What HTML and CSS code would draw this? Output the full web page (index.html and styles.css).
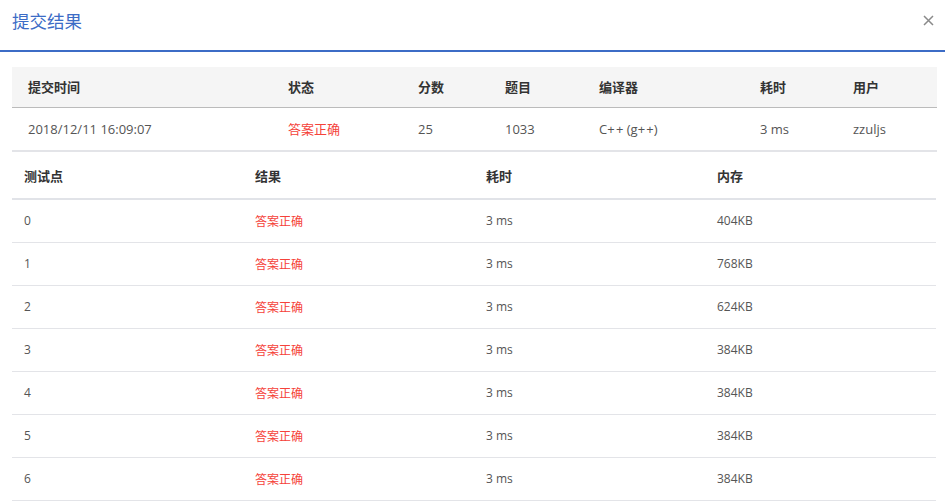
FILE: index.html
```html
<!DOCTYPE html>
<html lang="zh-CN">
<head>
    <meta charset="UTF-8">
    <title>提交结果</title>
    <link rel="stylesheet" href="styles.css">
</head>
<body>

    <div class="modal">
        <div class="modal-header">
            <h2 class="modal-title">提交结果</h2>
            <svg class="close" width="11" height="11" viewBox="0 0 11 11">
                <path d="M1 1L10 10M10 1L1 10" stroke="#8a8a8a" stroke-width="1.5" fill="none"/>
            </svg>
        </div>

        <div class="modal-body">
            <table class="summary">
                <thead>
                    <tr>
                        <th class="c-time">提交时间</th>
                        <th class="c-state">状态</th>
                        <th class="c-score">分数</th>
                        <th class="c-prob">题目</th>
                        <th class="c-lang">编译器</th>
                        <th class="c-cost">耗时</th>
                        <th class="c-user">用户</th>
                    </tr>
                </thead>
                <tbody>
                    <tr>
                        <td>2018/12/11 16:09:07</td>
                        <td class="ok">答案正确</td>
                        <td>25</td>
                        <td>1033</td>
                        <td>C+&#8202;+ (g+&#8202;+)</td>
                        <td>3 ms</td>
                        <td>zzuljs</td>
                    </tr>
                </tbody>
            </table>

            <table class="cases">
                <thead>
                    <tr>
                        <th>测试点</th>
                        <th>结果</th>
                        <th>耗时</th>
                        <th>内存</th>
                    </tr>
                </thead>
                <tbody>
                    <tr><td>0</td><td class="ok">答案正确</td><td>3 ms</td><td>404KB</td></tr>
                    <tr><td>1</td><td class="ok">答案正确</td><td>3 ms</td><td>768KB</td></tr>
                    <tr><td>2</td><td class="ok">答案正确</td><td>3 ms</td><td>624KB</td></tr>
                    <tr><td>3</td><td class="ok">答案正确</td><td>3 ms</td><td>384KB</td></tr>
                    <tr><td>4</td><td class="ok">答案正确</td><td>3 ms</td><td>384KB</td></tr>
                    <tr><td>5</td><td class="ok">答案正确</td><td>3 ms</td><td>384KB</td></tr>
                    <tr><td>6</td><td class="ok">答案正确</td><td>3 ms</td><td>384KB</td></tr>
                </tbody>
            </table>
        </div>
    </div>

</body>
</html>
```

FILE: styles.css
```css
* {
    box-sizing: border-box;
    margin: 0;
    padding: 0;
}

body {
    background: #fff;
    font-family: "Open Sans", "Noto Sans CJK SC", sans-serif;
    color: #555;
    overflow: hidden;
}

/* Header */
.modal-header {
    display: flex;
    justify-content: space-between;
    align-items: center;
    height: 52px;
    padding: 0 11px 8px 12px;
    border-bottom: 2px solid #3c6cc6;
}

.modal-title {
    font-size: 17.5px;
    font-weight: normal;
    color: #3c6cc6;
    font-family: "Noto Sans CJK SC", sans-serif;
    line-height: 1;
}

.close {
    display: block;
    cursor: pointer;
    margin-top: -2px;
}

.modal-body {
    padding: 15px 8px 0 12px;
}

table {
    width: 925px;
    border-collapse: collapse;
    table-layout: fixed;
}

th {
    text-align: left;
    font-weight: bold;
    color: #333;
    font-family: "Noto Sans CJK SC", sans-serif;
}

.ok {
    color: #f5423a;
    font-family: "Noto Sans CJK SC", sans-serif;
}

/* Summary table */
.summary {
    font-size: 13px;
}

.summary th {
    background: #f5f5f5;
    height: 40px;
    padding: 0 16px;
    border-bottom: 1px solid #bbb;
}

.summary td {
    height: 44px;
    padding: 0 16px;
    border-bottom: 2px solid #e3e4e8;
}

.c-time { width: 260px; }
.c-state { width: 130px; }
.c-score { width: 87px; }
.c-prob { width: 94px; }
.c-lang { width: 161px; }
.c-cost { width: 93px; }

/* Test case table */
.cases {
    width: 924px;
    font-size: 12px;
}

.cases th {
    height: 47px;
    padding: 0 12px;
    font-size: 13px;
    border-bottom: 2px solid #e1e3e8;
}

.cases td {
    height: 43px;
    padding: 0 12px;
    border-bottom: 1px solid #e3e4e8;
}
```
